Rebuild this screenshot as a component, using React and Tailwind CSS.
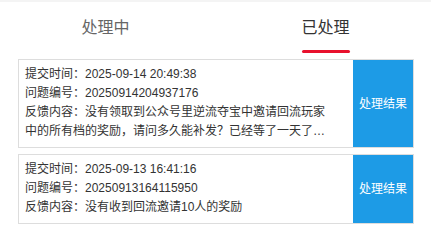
import React from "react";

const TABS = ["处理中", "已处理"];

const RECORDS = [
  {
    time: "2025-09-14 20:49:38",
    no: "20250914204937176",
    content: "没有领取到公众号里逆流夺宝中邀请回流玩家中的所有档的奖励，请问多久能补发？已经等了一天了还没有到账",
  },
  {
    time: "2025-09-13 16:41:16",
    no: "20250913164115950",
    content: "没有收到回流邀请10人的奖励",
  },
];

const FONT = { fontFamily: '"Liberation Sans", Arial, "Noto Sans CJK SC", sans-serif' };

export default function App() {
  const active = 1;

  return (
    <div className="w-[431px] h-[243px] bg-white overflow-hidden border-t-2 border-[#f4f4f4]" style={FONT}>
      <div className="flex justify-center gap-[172px]">
        {TABS.map((tab, index) => (
          <div key={tab} className="flex flex-col items-center pt-[15px]">
            <span
              className={`text-[16px] leading-[22px] ${index === active ? "text-[#333333]" : "text-[#666666]"}`}
            >
              {tab}
            </span>
            <div
              className={`mt-[11px] h-[3px] w-[48px] rounded-full ${index === active ? "bg-[#e8112d]" : "bg-transparent"}`}
            ></div>
          </div>
        ))}
      </div>

      <div className="mt-[6px] ml-[18px] w-[396px] flex flex-col gap-[6px]">
        {RECORDS.map((item) => (
          <div key={item.no} className="flex border border-[#dddddd]">
            <div className="flex-1 min-w-0 pl-[6px] pr-[20px] pt-[5px] pb-[6px] text-[12px] leading-[19px] text-[#333333]">
              <p>提交时间：{item.time}</p>
              <p>问题编号：{item.no}</p>
              <p className="line-clamp-2">反馈内容：{item.content}</p>
            </div>
            <div className="w-[60px] shrink-0 bg-[#1d9be6] flex items-center justify-center text-[12px] text-white">
              处理结果
            </div>
          </div>
        ))}
      </div>
    </div>
  );
}
